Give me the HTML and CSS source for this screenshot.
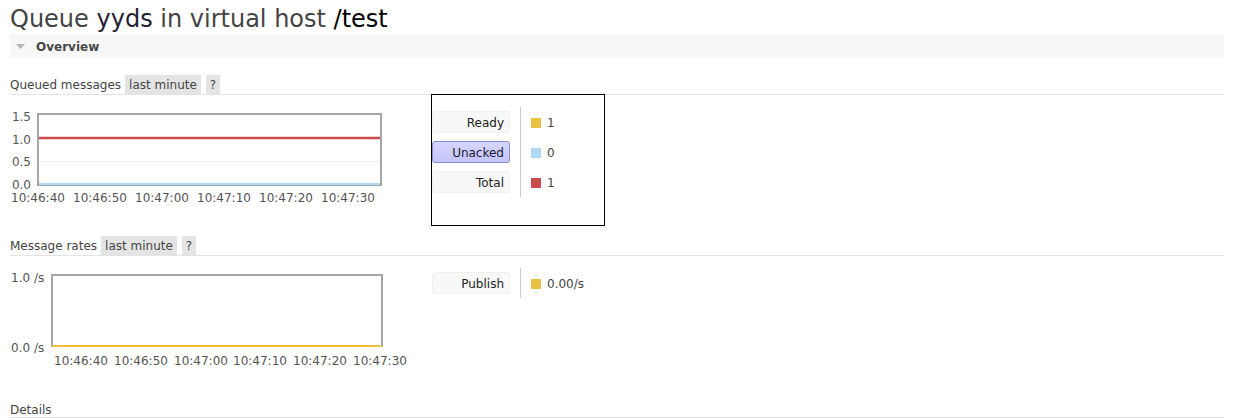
FILE: index.html
```html
<!DOCTYPE html>
<html>
<head>
<meta charset="utf-8">
<link rel="stylesheet" href="styles.css">
</head>
<body>
<h1 class="title">Queue <b class="name">yyds</b> in virtual host <b class="vhost">/test</b></h1>

<div class="panel-head">
  <svg class="tri" width="9" height="5" viewBox="0 0 9 5"><polygon points="0,0 9,0 4.5,5" fill="#b3b3b3"/></svg>
  <span class="panel-title">Overview</span>
</div>

<div class="sec-head">
  <span class="sec-label">Queued messages</span>
  <span class="btn">last minute</span>
  <span class="btn">?</span>
</div>

<div class="chart-row">
  <svg class="chart" width="421" height="131" viewBox="0 0 421 131">
    <line x1="29" y1="66.5" x2="370" y2="66.5" stroke="#eeeeee" stroke-width="1"/>
    <rect x="28" y="19" width="343" height="71" fill="none" stroke="#a6a6a6" stroke-width="2"/>
    <line x1="29" y1="43" x2="370" y2="43" stroke="#cb4b4b" stroke-width="2.5"/>
    <line x1="29" y1="89" x2="370" y2="89" stroke="#afd8f8" stroke-width="2"/>
    <g class="tick" text-anchor="end">
      <text x="21" y="26">1.5</text>
      <text x="21" y="48.5">1.0</text>
      <text x="21" y="71">0.5</text>
      <text x="21" y="93.5">0.0</text>
    </g>
    <g class="tick">
      <text x="1" y="107">10:46:40</text>
      <text x="63" y="107">10:46:50</text>
      <text x="125" y="107">10:47:00</text>
      <text x="187" y="107">10:47:10</text>
      <text x="249" y="107">10:47:20</text>
      <text x="311" y="107">10:47:30</text>
    </g>
  </svg>
  <div class="legend boxed">
    <div class="leg-labels">
      <div class="leg-row"><span class="tag">Ready</span></div>
      <div class="leg-row"><span class="tag tag-on">Unacked</span></div>
      <div class="leg-row"><span class="tag">Total</span></div>
    </div>
    <div class="leg-values">
      <div class="leg-row"><span class="sw sw-yellow"></span><span class="val">1</span></div>
      <div class="leg-row"><span class="sw sw-blue"></span><span class="val">0</span></div>
      <div class="leg-row"><span class="sw sw-red"></span><span class="val">1</span></div>
    </div>
  </div>
</div>

<div class="sec-head sec-rates">
  <span class="sec-label">Message rates</span>
  <span class="btn">last minute</span>
  <span class="btn">?</span>
</div>

<div class="chart-row">
  <svg class="chart" width="421" height="120" viewBox="0 0 421 120">
    <rect x="42" y="19" width="330" height="71" fill="none" stroke="#a6a6a6" stroke-width="2"/>
    <line x1="42" y1="90" x2="372" y2="90" stroke="#edc240" stroke-width="2"/>
    <g class="tick">
      <text x="1" y="26">1.0 /s</text>
      <text x="1" y="96">0.0 /s</text>
    </g>
    <g class="tick">
      <text x="44" y="109">10:46:40</text>
      <text x="104" y="109">10:46:50</text>
      <text x="164" y="109">10:47:00</text>
      <text x="223" y="109">10:47:10</text>
      <text x="283" y="109">10:47:20</text>
      <text x="343" y="109">10:47:30</text>
    </g>
  </svg>
  <div class="legend">
    <div class="leg-labels">
      <div class="leg-row"><span class="tag">Publish</span></div>
    </div>
    <div class="leg-values">
      <div class="leg-row"><span class="sw sw-yellow"></span><span class="val">0.00/s</span></div>
    </div>
  </div>
</div>

<div class="sec-head sec-details">
  <span class="sec-label">Details</span>
</div>
</body>
</html>
```

FILE: styles.css
```css
html, body {
  margin: 0;
  padding: 0;
  background: #ffffff;
}
body {
  padding: 0 13px 0 10px;
  font-family: "DejaVu Sans", Verdana, sans-serif;
  font-size: 12px;
  color: #444444;
}
.title {
  margin: 0;
  padding-top: 5px;
  font-size: 24px;
  line-height: 29px;
  font-weight: normal;
  color: #444444;
  white-space: nowrap;
}
.title b {
  font-weight: normal;
}
.title .name {
  color: #222233;
}
.title .vhost {
  color: #000000;
}
.panel-head {
  height: 24px;
  background: #f7f7f7;
  display: flex;
  align-items: center;
  padding-left: 6px;
}
.tri {
  display: block;
  margin-top: 1px;
}
.panel-title {
  margin-left: 11px;
  font-weight: bold;
  color: #484848;
  line-height: 24px;
  padding-top: 2px;
}
.sec-head {
  margin-top: 17px;
  height: 19px;
  border-bottom: 1px solid #e4e4e4;
  display: flex;
  align-items: stretch;
  line-height: 19px;
}
.sec-rates {
  margin-top: 10px;
}
.sec-details {
  margin-top: 22px;
}
.sec-head > span {
  box-sizing: border-box;
  height: 19px;
  padding-top: 1px;
  overflow: hidden;
}
.sec-details > span {
  padding-top: 3px;
}
.sec-label {
  margin-right: 4px;
}
.btn {
  background: #e4e4e4;
  padding: 0 4px;
  margin-right: 5px;
}
.chart-row {
  display: flex;
  align-items: flex-start;
}
.chart {
  display: block;
  flex: none;
}
.tick text {
  font-family: "DejaVu Sans", Verdana, sans-serif;
  font-size: 12px;
  fill: #545454;
}
.legend {
  margin-top: -1px;
  padding-top: 12px;
  border: 1px solid transparent;
  display: flex;
  align-items: flex-start;
  box-sizing: border-box;
}
.legend.boxed {
  border-color: #000000;
  width: 174px;
  height: 132px;
}
.leg-labels {
  width: 88px;
}
.leg-values {
  border-left: 1px solid #cccccc;
  padding-left: 10px;
}
.leg-row {
  height: 30px;
  display: flex;
  align-items: center;
}
.tag {
  box-sizing: border-box;
  width: 78px;
  height: 22px;
  line-height: 21px;
  padding-top: 1px;
  text-align: right;
  padding-right: 5px;
  background: #f8f8f8;
  border: 1px solid #efefef;
  border-radius: 3px;
  color: #222222;
}
.tag-on {
  background: linear-gradient(#d6d6ff, #c4c4fb);
  border-color: #8c8cd8;
  color: #1a1a33;
}
.sw {
  width: 10px;
  height: 10px;
  margin-top: 2px;
  margin-right: 6px;
}
.sw-yellow { background: #edc240; }
.sw-blue { background: #afd8f8; }
.sw-red { background: #cb4b4b; }
.val {
  color: #444444;
  padding-top: 1px;
}
```
